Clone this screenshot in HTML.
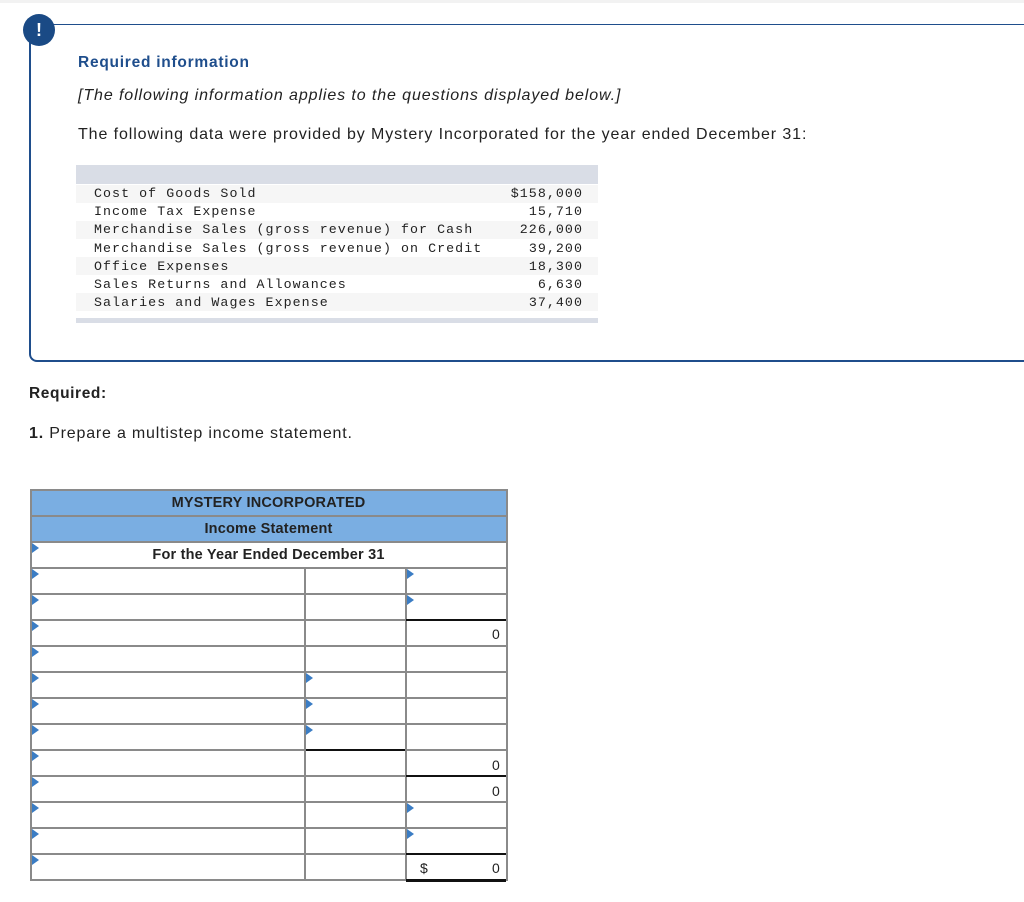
<!DOCTYPE html>
<html><head><meta charset="utf-8"><style>
*{margin:0;padding:0;box-sizing:border-box}
body{width:1024px;height:902px;background:#fff;position:relative;font-family:"Liberation Sans",sans-serif;color:#222;overflow:hidden}
.abs{position:absolute}
.box{left:29px;top:24px;width:1010px;height:338px;border:2px solid #1f4e8c;border-right:none;border-radius:0 0 0 8px;border-top-width:1.5px}
.circ{left:23px;top:14px;width:32px;height:32px;border-radius:50%;background:#1a4a85;color:#fff;font-weight:bold;font-size:18px;text-align:center;line-height:32px}
.mono{font-family:"Liberation Mono",monospace;font-size:13.3px;line-height:18.2px;color:#222;letter-spacing:1.05px}
.tri{position:absolute;width:0;height:0;border-top:5px solid transparent;border-bottom:5px solid transparent;border-left:7px solid #3b7dc4}
.hl{position:absolute;height:2px;background:#8a8a8a}
.vl{position:absolute;width:2px;background:#8a8a8a}
.bl{position:absolute;height:2px;background:#111}
.c{position:absolute;font-size:14.5px;font-weight:bold;text-align:center;left:30px;width:477px;letter-spacing:0.2px}
.z{position:absolute;font-size:14px;color:#222}
</style></head><body>
<div class="abs" style="left:0;top:0;width:1024px;height:3px;background:#f2f2f2"></div>
<div class="abs box"></div>
<div class="abs circ">!</div>
<div class="abs" style="left:78px;top:54px;font-size:15.5px;font-weight:bold;color:#1f4e8c;letter-spacing:0.75px">Required information</div>
<div class="abs" style="left:78px;top:87px;font-size:16px;font-style:italic;color:#222;letter-spacing:0.9px">[The following information applies to the questions displayed below.]</div>
<div class="abs" style="left:78px;top:126px;font-size:16px;color:#222;letter-spacing:0.9px">The following data were provided by Mystery Incorporated for the year ended December 31:</div>
<div class="abs" style="left:76px;top:165px;width:522px;height:19px;background:#d9dde6"></div>
<div class="abs" style="left:76px;top:318px;width:522px;height:5px;background:#d9dde6"></div>
<div class="abs" style="left:76px;top:185px;width:522px;height:18px;background:#f6f6f6"></div>
<div class="abs" style="left:76px;top:221px;width:522px;height:18px;background:#f6f6f6"></div>
<div class="abs" style="left:76px;top:257px;width:522px;height:18px;background:#f6f6f6"></div>
<div class="abs" style="left:76px;top:293px;width:522px;height:18px;background:#f6f6f6"></div>
<div class="abs mono" style="left:94px;top:185px">Cost of Goods Sold<br>Income Tax Expense<br>Merchandise Sales (gross revenue) for Cash<br>Merchandise Sales (gross revenue) on Credit<br>Office Expenses<br>Sales Returns and Allowances<br>Salaries and Wages Expense</div>
<div class="abs mono" style="left:470px;top:185px;width:113px;text-align:right">$158,000<br>15,710<br>226,000<br>39,200<br>18,300<br>6,630<br>37,400</div>
<div class="abs" style="left:29px;top:385px;font-size:15.5px;font-weight:bold;letter-spacing:0.6px">Required:</div>
<div class="abs" style="left:29px;top:425px;font-size:16px;letter-spacing:0.8px"><b>1.</b> Prepare a multistep income statement.</div>

<div class="abs" style="left:30px;top:490px;width:477px;height:52px;background:#7aaee2"></div>
<div class="c" style="top:495px">MYSTERY INCORPORATED</div>
<div class="c" style="top:521px">Income Statement</div>
<div class="c" style="top:547px">For the Year Ended December 31</div>
<div class="hl" style="left:30px;width:477px;top:489px"></div>
<div class="hl" style="left:30px;width:477px;top:515px"></div>
<div class="hl" style="left:30px;width:477px;top:541px"></div>
<div class="hl" style="left:30px;width:477px;top:567px"></div>
<div class="hl" style="left:30px;width:477px;top:593px"></div>
<div class="hl" style="left:30px;width:477px;top:619px"></div>
<div class="hl" style="left:30px;width:477px;top:645px"></div>
<div class="hl" style="left:30px;width:477px;top:671px"></div>
<div class="hl" style="left:30px;width:477px;top:697px"></div>
<div class="hl" style="left:30px;width:477px;top:723px"></div>
<div class="hl" style="left:30px;width:477px;top:749px"></div>
<div class="hl" style="left:30px;width:477px;top:775px"></div>
<div class="hl" style="left:30px;width:477px;top:801px"></div>
<div class="hl" style="left:30px;width:477px;top:827px"></div>
<div class="hl" style="left:30px;width:477px;top:853px"></div>
<div class="hl" style="left:30px;width:477px;top:879px"></div>
<div class="vl" style="left:30px;top:489px;height:392px"></div>
<div class="vl" style="left:506px;top:489px;height:392px"></div>
<div class="vl" style="left:304px;top:567px;height:314px"></div>
<div class="vl" style="left:405px;top:567px;height:314px"></div>
<div class="bl" style="left:406px;width:100px;top:619px"></div>
<div class="bl" style="left:306px;width:99px;top:749px"></div>
<div class="bl" style="left:406px;width:100px;top:775px"></div>
<div class="bl" style="left:406px;width:100px;top:853px"></div>
<div class="bl" style="left:406px;width:100px;top:879px;height:3px"></div>
<div class="tri" style="left:32px;top:543px"></div>
<div class="tri" style="left:32px;top:569px"></div>
<div class="tri" style="left:32px;top:595px"></div>
<div class="tri" style="left:32px;top:621px"></div>
<div class="tri" style="left:32px;top:647px"></div>
<div class="tri" style="left:32px;top:673px"></div>
<div class="tri" style="left:32px;top:699px"></div>
<div class="tri" style="left:32px;top:725px"></div>
<div class="tri" style="left:32px;top:751px"></div>
<div class="tri" style="left:32px;top:777px"></div>
<div class="tri" style="left:32px;top:803px"></div>
<div class="tri" style="left:32px;top:829px"></div>
<div class="tri" style="left:32px;top:855px"></div>
<div class="tri" style="left:306px;top:673px"></div>
<div class="tri" style="left:306px;top:699px"></div>
<div class="tri" style="left:306px;top:725px"></div>
<div class="tri" style="left:407px;top:569px"></div>
<div class="tri" style="left:407px;top:595px"></div>
<div class="tri" style="left:407px;top:803px"></div>
<div class="tri" style="left:407px;top:829px"></div>
<div class="z" style="left:492px;top:626px">0</div>
<div class="z" style="left:492px;top:757px">0</div>
<div class="z" style="left:492px;top:783px">0</div>
<div class="z" style="left:492px;top:860px">0</div>
<div class="z" style="left:420px;top:860px">$</div>
</body></html>
